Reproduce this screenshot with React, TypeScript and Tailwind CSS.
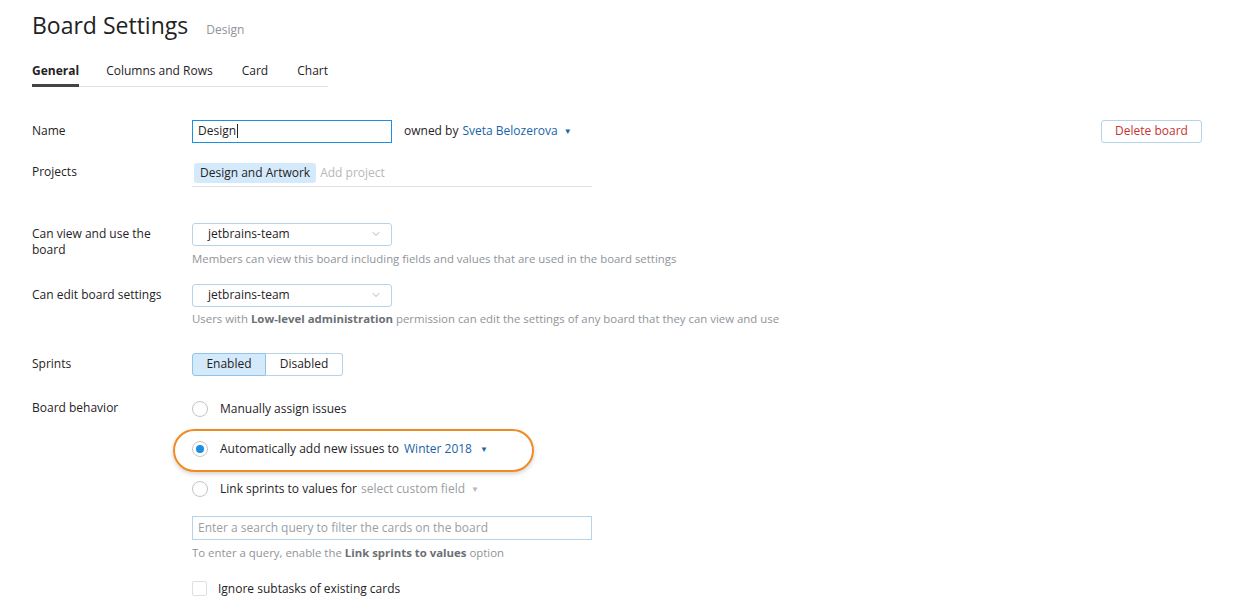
import { ChevronDown } from "lucide-react";

const font = { fontFamily: '"Open Sans", "Noto Sans", sans-serif' };

function Caret({ className = "text-[#1a64a6]" }: { className?: string }) {
  return <span className={`ml-[6px] text-[8px] leading-none ${className}`}>▼</span>;
}

function Select({ value }: { value: string }) {
  return (
    <div className="flex h-[23px] w-[200px] items-center justify-between rounded-[3px] border border-[#b7d3ea] pl-[15px] pr-[9px] text-[12px] text-[#1f2326]">
      <span>{value}</span>
      <ChevronDown size={12} strokeWidth={1.4} className="text-[#8a9096]" />
    </div>
  );
}

function Radio({ checked }: { checked?: boolean }) {
  return (
    <span className="flex h-[16px] w-[16px] items-center justify-center rounded-full border border-[#c5c5c5] bg-white">
      {checked && <span className="h-[8px] w-[8px] rounded-full bg-[#1a8fe3]" />}
    </span>
  );
}

function Row({ label, children, className = "" }: { label: React.ReactNode; children: React.ReactNode; className?: string }) {
  return (
    <div className={`flex ${className}`}>
      <div className="w-[160px] shrink-0 text-[12px] leading-[16px] text-[#1f2326]">{label}</div>
      <div className="flex-1">{children}</div>
    </div>
  );
}

export default function App() {
  return (
    <div className="h-[616px] w-[1234px] overflow-hidden bg-white pl-[32px] pt-[8px]" style={font}>
      {/* Header */}
      <div className="flex items-baseline">
        <h1 className="text-[23px] font-normal text-[#1f2326]">Board Settings</h1>
        <span className="ml-[18px] text-[12px] text-[#8f9499]">Design</span>
      </div>

      {/* Tabs */}
      <div className="mt-[19px] flex w-[296px] border-b border-[#dfe0e5] text-[12px] text-[#1f2326]">
        <div className="-mb-px border-b-[3px] border-[#444] pb-[3px] font-bold">General</div>
        <div className="ml-[27px] pb-[6px]">Columns and Rows</div>
        <div className="ml-[29px] pb-[6px]">Card</div>
        <div className="ml-[29px] pb-[6px]">Chart</div>
      </div>

      <div className="mt-[33px] pr-[32px]">
        {/* Name */}
        <Row label={<div className="pt-[3px]">Name</div>}>
          <div className="flex items-center">
            <div className="flex h-[23px] w-[200px] items-center border border-[#1a8fe3] px-[5px] text-[12px] text-[#1f2326]">
              Design<span className="ml-px inline-block h-[14px] w-px bg-[#1f2326]" />
            </div>
            <div className="ml-[12px] flex items-center text-[12px] text-[#1f2326]">
              owned by<span className="ml-[4px] text-[#1a64a6]">Sveta Belozerova</span>
              <Caret />
            </div>
            <div className="ml-auto flex h-[23px] w-[101px] items-center justify-center rounded-[3px] border border-[#b7d3ea] text-[12px] text-[#c83232]">
              Delete board
            </div>
          </div>
        </Row>

        {/* Projects */}
        <Row label={<div className="pt-[1px]">Projects</div>} className="mt-[20px]">
          <div className="flex w-[400px] items-center border-b border-[#dfe0e5] pb-[3px] pl-[2px]">
            <span className="rounded-[3px] bg-[#d4eafb] px-[6px] py-[1px] text-[12px] text-[#1f2326]">Design and Artwork</span>
            <span className="ml-[4px] text-[12px] text-[#b5b8bb]">Add project</span>
          </div>
        </Row>

        {/* Can view */}
        <Row label={<div className="w-[130px] pt-[3px]">Can view and use the board</div>} className="mt-[36px]">
          <Select value="jetbrains-team" />
          <div className="mt-[5px] text-[11.4px] leading-[16px] text-[#8f9499]">
            Members can view this board including fields and values that are used in the board settings
          </div>
        </Row>

        {/* Can edit */}
        <Row label={<div className="pt-[3px]">Can edit board settings</div>} className="mt-[17px]">
          <Select value="jetbrains-team" />
          <div className="mt-[4px] text-[11.4px] leading-[16px] text-[#8f9499]">
            Users with <b className="font-bold text-[#6b7075]">Low-level administration</b> permission can edit the settings of any board that they can view and use
          </div>
        </Row>

        {/* Sprints */}
        <Row label={<div className="pt-[3px]">Sprints</div>} className="mt-[26px]">
          <div className="flex h-[23px] text-[12px] text-[#1f2326]">
            <div className="flex w-[74px] items-center justify-center rounded-l-[3px] border border-[#8ec4ee] bg-[#d4eafb]">Enabled</div>
            <div className="flex w-[77px] items-center justify-center rounded-r-[3px] border border-l-0 border-[#b7d3ea]">Disabled</div>
          </div>
        </Row>

        {/* Board behavior */}
        <Row label="Board behavior" className="mt-[24px]">
          <div className="flex items-center text-[12px] text-[#1f2326]">
            <Radio />
            <span className="ml-[12px]">Manually assign issues</span>
          </div>
          <div className="relative mt-[22px] flex items-center text-[12px] text-[#1f2326]">
            <div className="pointer-events-none absolute left-[-19px] top-[-11px] h-[43px] w-[361px] rounded-full border-2 border-[#f08a24] shadow-[0_2px_4px_rgba(0,0,0,0.18)]" />
            <Radio checked />
            <span className="ml-[12px]">Automatically add new issues to</span>
            <span className="ml-[5px] text-[#1a64a6]">Winter 2018</span>
            <Caret className="ml-[8px] text-[#1a64a6]" />
          </div>
          <div className="mt-[22px] flex items-center text-[12px] text-[#1f2326]">
            <Radio />
            <span className="ml-[12px]">Link sprints to values for</span>
            <span className="ml-[4px] text-[#9a9ea2]">select custom field</span>
            <Caret className="ml-[3px] text-[#b5b8bb]" />
          </div>
          <div className="mt-[18px] flex h-[24px] w-[400px] items-center border border-[#b7d3ea] px-[5px] text-[12px] text-[#9a9ea2]">
            Enter a search query to filter the cards on the board
          </div>
          <div className="mt-[5px] text-[11.4px] leading-[16px] text-[#8f9499]">
            To enter a query, enable the <b className="font-bold text-[#6b7075]">Link sprints to values</b> option
          </div>
          <div className="mt-[19px] flex items-center text-[12px] text-[#1f2326]">
            <span className="h-[15px] w-[15px] rounded-[2px] border border-[#dcdfe3] bg-white" />
            <span className="ml-[11px]">Ignore subtasks of existing cards</span>
          </div>
        </Row>
      </div>
    </div>
  );
}
